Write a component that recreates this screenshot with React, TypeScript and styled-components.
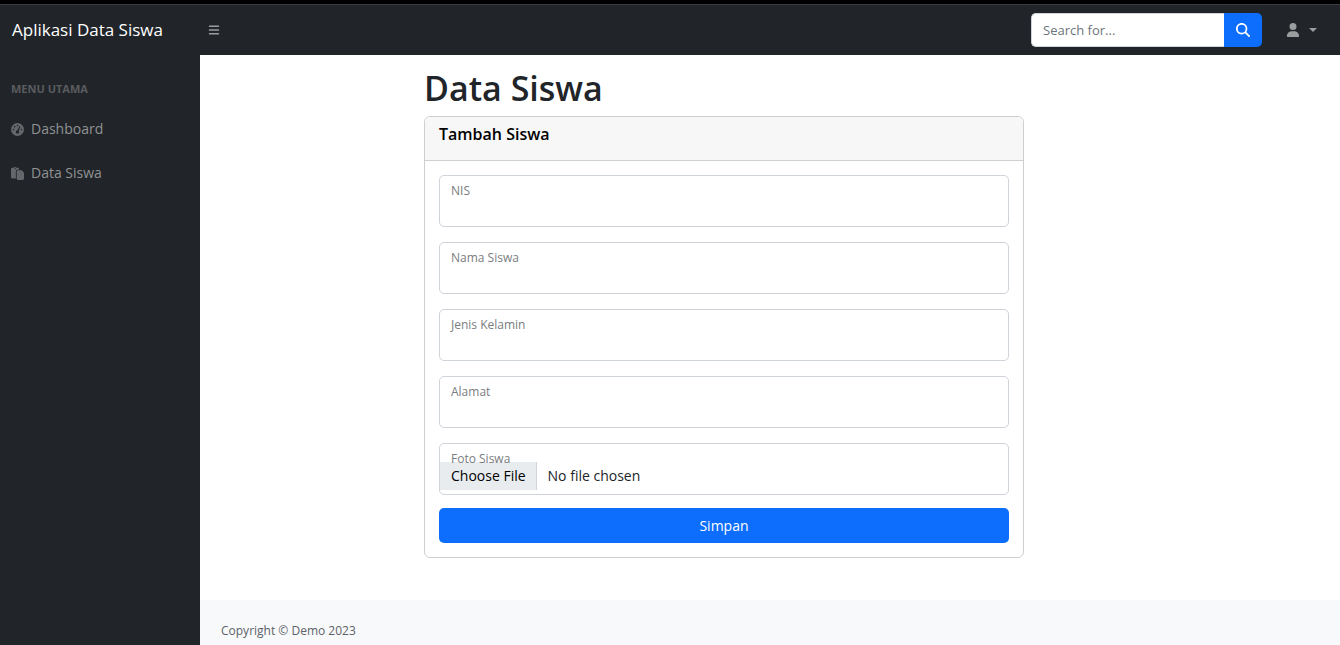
import React from "react";
import styled, { createGlobalStyle } from "styled-components";
import {
  FaBars,
  FaGaugeHigh,
  FaMagnifyingGlass,
  FaPaste,
  FaUser,
} from "react-icons/fa6";

const GlobalStyle = createGlobalStyle`
  *, *::before, *::after { box-sizing: border-box; }
  body {
    margin: 0;
    background: #fff;
    color: #212529;
    font-family: "Segoe UI", "Open Sans", sans-serif;
    font-size: 14px;
    line-height: 20px;
  }
  button, input { font: inherit; }
`;

const Page = styled.div`
  display: flex;
  flex-direction: column;
  min-height: 100vh;
  border-top: 4px solid #000;
`;

const TopBar = styled.header`
  display: flex;
  align-items: center;
  height: 51px;
  padding: 0 15px 0 12px;
  border-top: 1px solid #3a3d40;
  background: #212529;
`;

const Brand = styled.a`
  width: 188px;
  color: #fff;
  font-size: 17px;
  line-height: 24px;
  text-decoration: none;
`;

const IconButton = styled.button`
  display: flex;
  align-items: center;
  gap: 9px;
  padding: 8px;
  border: 0;
  background: none;
  color: #9b9d9f;
  cursor: pointer;
`;

const Caret = styled.span`
  border: 4px solid transparent;
  border-top-color: currentColor;
  border-bottom: 0;
`;

const SearchForm = styled.form`
  display: flex;
  width: 231px;
  height: 34px;
  margin: 0 16px 0 auto;
`;

const SearchInput = styled.input`
  flex: 1;
  min-width: 0;
  padding: 0 11px;
  border: 1px solid #ced4da;
  border-right: 0;
  border-radius: 5px 0 0 5px;
  background: #fff;
  font-size: 13px;
  &::placeholder { color: #6c757d; opacity: 1; }
`;

const SearchButton = styled.button`
  display: grid;
  place-items: center;
  width: 38px;
  padding: 0;
  border: 0;
  border-radius: 0 5px 5px 0;
  background: #0d6efd;
  color: #fff;
  cursor: pointer;
`;

const Body = styled.div`
  display: flex;
  flex: 1;
`;

const Sidebar = styled.nav`
  flex: 0 0 200px;
  padding: 24px 11px;
  background: #212529;
`;

const MenuHeading = styled.div`
  margin-bottom: 8px;
  color: #595c5f;
  font-size: 11px;
  font-weight: 700;
  text-transform: uppercase;
`;

const MenuLink = styled.a`
  display: flex;
  align-items: center;
  gap: 7px;
  height: 44px;
  color: #909294;
  text-decoration: none;
  svg { color: #65686a; }
`;

const Content = styled.div`
  display: flex;
  flex: 1;
  flex-direction: column;
  min-width: 0;
`;

const Main = styled.main`
  flex: 1;
  width: 100%;
  max-width: 824px;
  padding: 12px 0 42px 224px;
`;

const Title = styled.h1`
  margin: 0 0 6px;
  font-size: 34px;
  font-weight: 600;
  line-height: 43px;
`;

const Card = styled.section`
  border: 1px solid #cfcfcf;
  border-radius: 6px;
`;

const CardHeader = styled.header`
  padding: 7px 14px 15px;
  border-bottom: 1px solid #cfcfcf;
  border-radius: 5px 5px 0 0;
  background: #f7f7f7;
`;

const CardTitle = styled.h2`
  margin: 0;
  color: #000;
  font-size: 16px;
  font-weight: 600;
  line-height: 21px;
`;

const Form = styled.form`
  display: grid;
  gap: 13px;
  padding: 14px;
`;

const FieldList = styled.div`
  display: grid;
  gap: 15px;
`;

const Field = styled.div`
  position: relative;
  height: 52px;
`;

const FieldLabel = styled.label`
  position: absolute;
  top: 6px;
  left: 12px;
  color: #7a7d80;
  font-size: 12px;
  line-height: 20px;
  pointer-events: none;
`;

const FieldInput = styled.input`
  display: block;
  width: 100%;
  height: 100%;
  padding: 18px 11px 4px;
  border: 1px solid #ced4da;
  border-radius: 5px;
  background: #fff;
  color: #212529;

  &::file-selector-button {
    height: 28px;
    margin: 0 11px 0 -11px;
    padding: 0 10px 0 11px;
    border: 0;
    border-right: 1px solid #ced4da;
    background: #e9ecef;
    color: #000;
    font: inherit;
  }
`;

const SubmitButton = styled.button`
  height: 35px;
  border: 0;
  border-radius: 5px;
  background: #0d6efd;
  color: #fff;
  cursor: pointer;
`;

const Footer = styled.footer`
  padding: 21px 21px 4px;
  background: #f8f9fa;
  color: #5c6369;
  font-size: 12px;
`;

const fields = [
  { id: "nis", label: "NIS", type: "text" },
  { id: "nama", label: "Nama Siswa", type: "text" },
  { id: "jenis-kelamin", label: "Jenis Kelamin", type: "text" },
  { id: "alamat", label: "Alamat", type: "text" },
  { id: "foto", label: "Foto Siswa", type: "file" },
];

export default function App() {
  return (
    <Page>
      <GlobalStyle />
      <TopBar>
        <Brand href="#">Aplikasi Data Siswa</Brand>
        <IconButton type="button" aria-label="Toggle menu">
          <FaBars size={12} />
        </IconButton>
        <SearchForm role="search" onSubmit={(e) => e.preventDefault()}>
          <SearchInput type="text" aria-label="Search" placeholder="Search for..." />
          <SearchButton type="submit" aria-label="Search">
            <FaMagnifyingGlass size={14} />
          </SearchButton>
        </SearchForm>
        <IconButton type="button" aria-label="Account">
          <FaUser size={14} />
          <Caret />
        </IconButton>
      </TopBar>
      <Body>
        <Sidebar>
          <MenuHeading>Menu Utama</MenuHeading>
          <MenuLink href="#">
            <FaGaugeHigh size={13} />
            Dashboard
          </MenuLink>
          <MenuLink href="#">
            <FaPaste size={13} />
            Data Siswa
          </MenuLink>
        </Sidebar>
        <Content>
          <Main>
            <Title>Data Siswa</Title>
            <Card>
              <CardHeader>
                <CardTitle>Tambah Siswa</CardTitle>
              </CardHeader>
              <Form onSubmit={(e) => e.preventDefault()}>
                <FieldList>
                  {fields.map((field) => (
                    <Field key={field.id}>
                      <FieldInput id={field.id} name={field.id} type={field.type} />
                      <FieldLabel htmlFor={field.id}>{field.label}</FieldLabel>
                    </Field>
                  ))}
                </FieldList>
                <SubmitButton type="submit">Simpan</SubmitButton>
              </Form>
            </Card>
          </Main>
          <Footer>Copyright © Demo 2023</Footer>
        </Content>
      </Body>
    </Page>
  );
}
